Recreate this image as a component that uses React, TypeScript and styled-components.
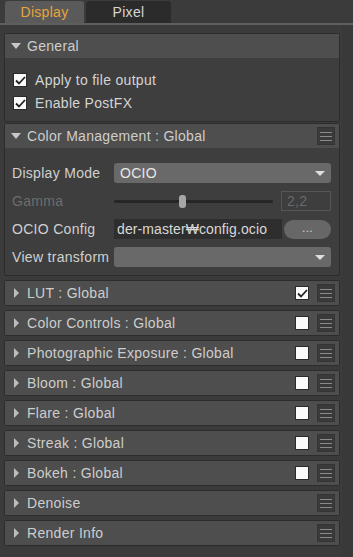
import * as React from 'react';
import styled, { createGlobalStyle } from 'styled-components';

const GlobalStyle = createGlobalStyle`
  html, body {
    margin: 0;
    padding: 0;
    background: #3b3b3b;
  }
  body {
    font-family: "Liberation Sans", "Noto Sans CJK KR", sans-serif;
    font-size: 14px;
    letter-spacing: 0.3px;
    color: #d2d2d2;
  }
`;

const Page = styled.div`
  width: 353px;
  height: 557px;
  display: flex;
  flex-direction: column;
  background: #3b3b3b;
  overflow: hidden;
`;

const TabBar = styled.div`
  display: flex;
  align-items: flex-end;
  gap: 2px;
  height: 25px;
  padding-left: 5px;
  border-bottom: 2px solid #5e5e5e;
  box-sizing: border-box;
`;

const Tab = styled.div<{ $active?: boolean }>`
  width: ${p => (p.$active ? 79 : 85)}px;
  height: 22px;
  display: flex;
  align-items: center;
  justify-content: center;
  font-size: 14px;
  border-radius: 3px 3px 0 0;
  background: ${p => (p.$active ? '#5a5a5a' : '#2b2b2b')};
  color: ${p => (p.$active ? '#e8a43c' : '#d6d6d6')};
`;

const Body = styled.div`
  flex: 1;
  display: flex;
`;

const List = styled.div`
  width: 336px;
  padding: 8px 0 0 4px;
  display: flex;
  flex-direction: column;
`;

const Track = styled.div`
  flex: 1;
  background: #393939;
  margin-left: 2px;
`;

const Section = styled.div<{ $gap?: number }>`
  margin-bottom: ${p => p.$gap ?? 4}px;
  border: 1px solid #2c2c2c;
  border-radius: 2px;
  background: #3e3e3e;
`;

const Header = styled.div`
  height: 24px;
  display: flex;
  align-items: center;
  background: #4e4e4e;
  padding: 0 4px 0 6px;
  gap: 6px;
`;

const Arrow = styled.span<{ $open?: boolean }>`
  width: 10px;
  display: flex;
  justify-content: center;
  &::before {
    content: '';
    display: block;
    ${p =>
      p.$open
        ? `border-left: 5px solid transparent; border-right: 5px solid transparent; border-top: 6px solid #c8c8c8;`
        : `border-top: 5px solid transparent; border-bottom: 5px solid transparent; border-left: 5px solid #bcbcbc; margin-left: 1px;`}
  }
`;

const Title = styled.span`
  flex: 1;
  color: #cdcdcd;
  white-space: nowrap;
`;

const Box = styled.span`
  width: 14px;
  height: 14px;
  background: #fafafa;
  border: 1px solid #2a2a2a;
  box-sizing: border-box;
  display: flex;
  align-items: center;
  justify-content: center;
  flex-shrink: 0;
`;

const MenuBtn = styled.span`
  width: 18px;
  height: 18px;
  margin-left: 2px;
  background: #3a3a3a;
  border: 1px solid #343434;
  box-sizing: border-box;
  display: flex;
  flex-direction: column;
  justify-content: center;
  align-items: center;
  gap: 3px;
  & > i {
    display: block;
    width: 12px;
    height: 1px;
    background: #8a8a8a;
  }
`;

const Check = () => (
  <svg width="11" height="9" viewBox="0 0 11 9">
    <path d="M1 4.5 L4 7.5 L10 1" fill="none" stroke="#222" strokeWidth="1.8" />
  </svg>
);

const CheckBox = ({ checked }: { checked?: boolean }) => (
  <Box>{checked && <Check />}</Box>
);

const Menu = () => (
  <MenuBtn>
    <i />
    <i />
    <i />
  </MenuBtn>
);

const GeneralBody = styled.div`
  padding: 15px 8px 11px 8px;
  display: flex;
  flex-direction: column;
  gap: 9px;
`;

const CheckRow = styled.label`
  display: flex;
  align-items: center;
  gap: 8px;
  color: #d4d4d4;
  height: 14px;
`;

const FormBody = styled.div`
  padding: 15px 8px 8px 7px;
  display: flex;
  flex-direction: column;
  gap: 8px;
`;

const FormRow = styled.div`
  display: grid;
  grid-template-columns: 102px 1fr;
  align-items: center;
  height: 20px;
`;

const Label = styled.span<{ $dim?: boolean }>`
  color: ${p => (p.$dim ? '#6c6c6c' : '#d0d0d0')};
  white-space: nowrap;
`;

const Select = styled.div`
  height: 20px;
  border-radius: 3px;
  background: #696969;
  display: flex;
  align-items: center;
  padding: 0 6px;
  color: #e6e6e6;
  &::after {
    content: '';
    margin-left: auto;
    border-left: 5px solid transparent;
    border-right: 5px solid transparent;
    border-top: 5px solid #e0e0e0;
  }
`;

const SliderWrap = styled.div`
  display: flex;
  align-items: center;
  gap: 8px;
`;

const SliderTrack = styled.div`
  position: relative;
  flex: 1;
  height: 3px;
  background: #262626;
  border-radius: 2px;
`;

const Thumb = styled.span`
  position: absolute;
  top: -5px;
  width: 7px;
  height: 13px;
  border-radius: 3px;
  background: #a6a6a6;
`;

const NumBox = styled.div`
  width: 50px;
  height: 20px;
  box-sizing: border-box;
  border: 1px solid #565656;
  color: #6a6a6a;
  display: flex;
  align-items: center;
  padding-left: 5px;
`;

const PathWrap = styled.div`
  display: flex;
  align-items: center;
  gap: 2px;
`;

const PathField = styled.div`
  flex: 1;
  height: 20px;
  background: #2e2e2e;
  color: #d8d8d8;
  display: flex;
  align-items: center;
  padding-left: 3px;
  overflow: hidden;
  white-space: nowrap;
  letter-spacing: 0.1px;
`;

const Browse = styled.div`
  width: 47px;
  height: 19px;
  border-radius: 10px;
  background: #676767;
  color: #d0d0d0;
  font-size: 12px;
  display: flex;
  align-items: center;
  justify-content: center;
  padding-bottom: 2px;
  box-sizing: border-box;
`;

const collapsed: { title: string; check?: boolean; checked?: boolean }[] = [
  { title: 'LUT : Global', check: true, checked: true },
  { title: 'Color Controls : Global', check: true },
  { title: 'Photographic Exposure : Global', check: true },
  { title: 'Bloom : Global', check: true },
  { title: 'Flare : Global', check: true },
  { title: 'Streak : Global', check: true },
  { title: 'Bokeh : Global', check: true },
  { title: 'Denoise' },
  { title: 'Render Info' },
];

export default function App() {
  return (
    <Page>
      <GlobalStyle />
      <TabBar>
        <Tab $active>Display</Tab>
        <Tab>Pixel</Tab>
      </TabBar>
      <Body>
        <List>
          <Section $gap={1}>
            <Header>
              <Arrow $open />
              <Title>General</Title>
            </Header>
            <GeneralBody>
              <CheckRow>
                <CheckBox checked />
                Apply to file output
              </CheckRow>
              <CheckRow>
                <CheckBox checked />
                Enable PostFX
              </CheckRow>
            </GeneralBody>
          </Section>

          <Section>
            <Header>
              <Arrow $open />
              <Title>Color Management : Global</Title>
              <Menu />
            </Header>
            <FormBody>
              <FormRow>
                <Label>Display Mode</Label>
                <Select>OCIO</Select>
              </FormRow>
              <FormRow>
                <Label $dim>Gamma</Label>
                <SliderWrap>
                  <SliderTrack>
                    <Thumb style={{ left: 65 }} />
                  </SliderTrack>
                  <NumBox>2,2</NumBox>
                </SliderWrap>
              </FormRow>
              <FormRow>
                <Label>OCIO Config</Label>
                <PathWrap>
                  <PathField>der-master₩config.ocio</PathField>
                  <Browse>...</Browse>
                </PathWrap>
              </FormRow>
              <FormRow>
                <Label>View transform</Label>
                <Select />
              </FormRow>
            </FormBody>
          </Section>

          {collapsed.map(s => (
            <Section key={s.title}>
              <Header>
                <Arrow />
                <Title>{s.title}</Title>
                {s.check && <CheckBox checked={s.checked} />}
                <Menu />
              </Header>
            </Section>
          ))}
        </List>
        <Track />
      </Body>
    </Page>
  );
}
